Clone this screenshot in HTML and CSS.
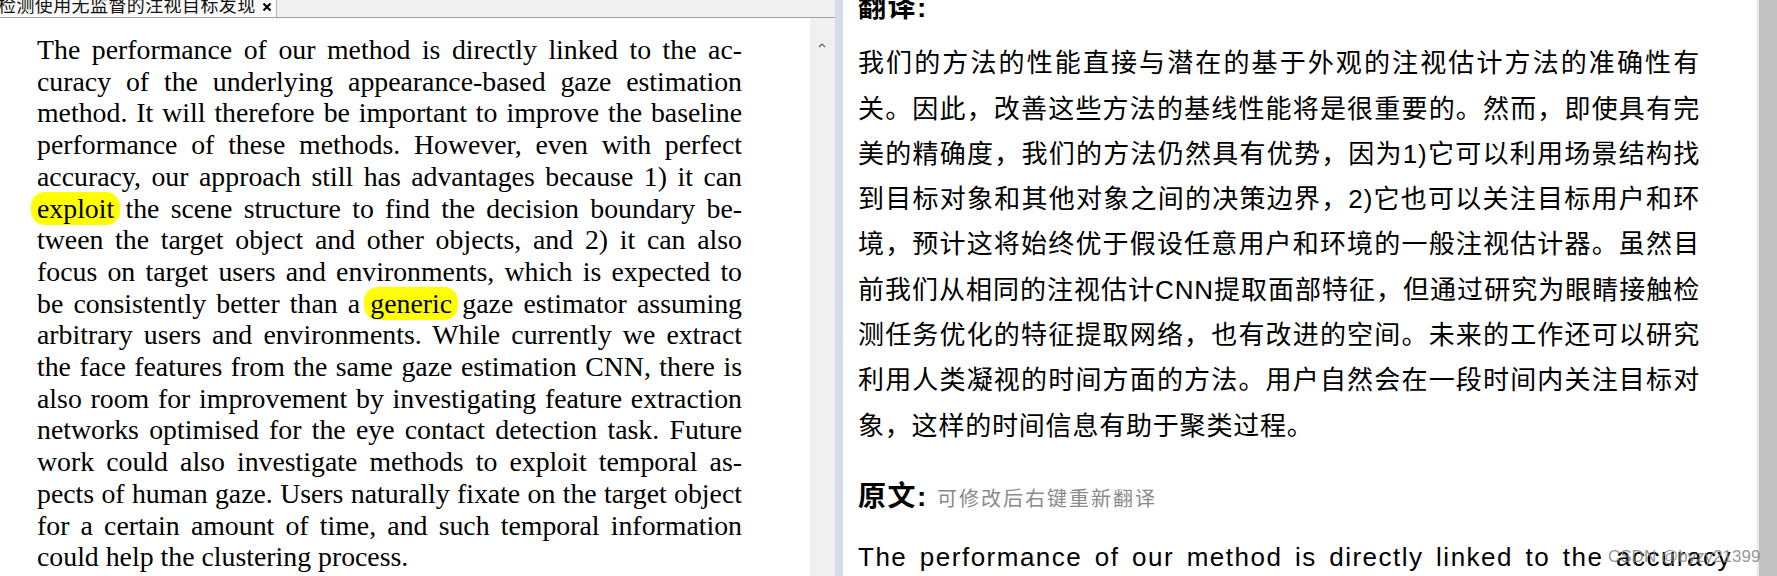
FILE: index.html
```html
<!DOCTYPE html>
<html lang="zh">
<head>
  <meta charset="UTF-8">
  <title>检测使用无监督的注视目标发现</title>
  <link rel="stylesheet" href="styles.css">
</head>
<body>
  <div class="app">
    <section class="reader">
      <div class="tabbar">
        <div class="tab">
          <span class="tab-title">检测使用无监督的注视目标发现</span>
          <svg class="tab-close" width="10" height="10" viewBox="0 0 10 10">
            <path d="M1.5 1.5 L8.5 8.5 M8.5 1.5 L1.5 8.5" stroke="#000" stroke-width="2.2" fill="none"/>
          </svg>
        </div>
      </div>
      <div class="reader-body">
        <div class="page">
          <div class="pdf-text">
            <span class="ln">The performance of our method is directly linked to the ac-</span>
            <span class="ln">curacy of the underlying appearance-based gaze estimation</span>
            <span class="ln">method. It will therefore be important to improve the baseline</span>
            <span class="ln">performance of these methods. However, even with perfect</span>
            <span class="ln">accuracy, our approach still has advantages because 1) it can</span>
            <span class="ln"><span class="hl">exploit</span> the scene structure to find the decision boundary be-</span>
            <span class="ln">tween the target object and other objects, and 2) it can also</span>
            <span class="ln">focus on target users and environments, which is expected to</span>
            <span class="ln">be consistently better than a <span class="hl">generic</span> gaze estimator assuming</span>
            <span class="ln">arbitrary users and environments. While currently we extract</span>
            <span class="ln">the face features from the same gaze estimation CNN, there is</span>
            <span class="ln">also room for improvement by investigating feature extraction</span>
            <span class="ln">networks optimised for the eye contact detection task. Future</span>
            <span class="ln">work could also investigate methods to exploit temporal as-</span>
            <span class="ln">pects of human gaze. Users naturally fixate on the target object</span>
            <span class="ln">for a certain amount of time, and such temporal information</span>
            <span class="ln end">could help the clustering process.</span>
          </div>
        </div>
        <div class="vscroll">
          <svg class="caret" width="8" height="5" viewBox="0 0 8 5">
            <path d="M1 4 L4 1 L7 4" stroke="#606060" stroke-width="1.2" fill="none"/>
          </svg>
        </div>
      </div>
    </section>

    <div class="splitter"></div>

    <section class="translate">
      <h2 class="head head-first">翻译:</h2>
      <div class="zh">
        <span class="ln">我们的方法的性能直接与潜在的基于外观的注视估计方法的准确性有</span>
        <span class="ln">关。因此，改善这些方法的基线性能将是很重要的。然而，即使具有完</span>
        <span class="ln">美的精确度，我们的方法仍然具有优势，因为1)它可以利用场景结构找</span>
        <span class="ln">到目标对象和其他对象之间的决策边界，2)它也可以关注目标用户和环</span>
        <span class="ln">境，预计这将始终优于假设任意用户和环境的一般注视估计器。虽然目</span>
        <span class="ln">前我们从相同的注视估计CNN提取面部特征，但通过研究为眼睛接触检</span>
        <span class="ln">测任务优化的特征提取网络，也有改进的空间。未来的工作还可以研究</span>
        <span class="ln">利用人类凝视的时间方面的方法。用户自然会在一段时间内关注目标对</span>
        <span class="ln end">象，这样的时间信息有助于聚类过程。</span>
      </div>
      <h2 class="head head-src">原文: <span class="hint">可修改后右键重新翻译</span></h2>
      <div class="src">
        <span class="ln">The performance of our method is directly linked to the accuracy</span>
      </div>
    </section>

    <div class="rscroll"></div>
  </div>

  <div class="watermark">CSDN @byzy21399</div>
</body>
</html>
```

FILE: styles.css
```css
html, body {
  margin: 0;
  height: 100%;
  overflow: hidden;
  background: #fff;
}

.app {
  display: flex;
  height: 576px;
  width: 1777px;
}

/* ---- left: pdf reader ---- */

.reader {
  width: 835px;
  display: flex;
  flex-direction: column;
  flex-shrink: 0;
}

.tabbar {
  height: 17px;
  background: #f0f0f0;
  border-bottom: 1px solid #a0a0a0;
  display: flex;
  overflow: hidden;
}

.tab {
  width: 276px;
  background: #fbfbfb;
  border-right: 1px solid #b4b4b4;
  display: flex;
  align-items: flex-start;
  overflow: hidden;
}

.tab-title {
  font-family: "Noto Sans CJK SC", sans-serif;
  font-size: 18px;
  line-height: 17px;
  letter-spacing: 0.4px;
  color: #111;
  margin-top: -4px;
  margin-left: -2px;
  white-space: nowrap;
}

.tab-close {
  margin-top: 2px;
  margin-left: 6px;
}

.reader-body {
  flex: 1;
  display: flex;
}

.page {
  width: 810px;
  background: #fff;
  padding-top: 16px;
}

.pdf-text {
  width: 705px;
  margin-left: 37px;
  font-family: "Liberation Serif", "Times New Roman", serif;
  font-size: 27.8px;
  line-height: 31.7px;
  color: #000;
}

.pdf-text .ln,
.zh .ln,
.src .ln {
  display: block;
  text-align: justify;
  text-align-last: justify;
}

.pdf-text .ln.end,
.zh .ln.end {
  text-align-last: left;
}

.hl {
  background: #ffff00;
  border-radius: 14px;
  padding: 1px 6px;
  margin: 0 -6px;
}

.vscroll {
  width: 25px;
  background: #f0f0f0;
  display: flex;
  justify-content: center;
  align-items: flex-start;
}

.caret {
  margin-top: 25px;
  margin-left: -2px;
}

.splitter {
  width: 8px;
  flex-shrink: 0;
  background: #d5dbef;
}

/* ---- right: translation ---- */

.translate {
  flex: 1;
  padding-left: 15px;
  background: #fff;
  font-family: "Liberation Sans", "Noto Sans CJK SC", sans-serif;
  color: #000;
  overflow: hidden;
}

.head {
  margin: 0;
  font-size: 28px;
  line-height: 45.3px;
  font-weight: bold;
  letter-spacing: 1.5px;
}

.head-first {
  margin-top: -15px;
}

.head-src {
  margin-top: 25px;
}

.hint {
  font-weight: normal;
  font-size: 20px;
  letter-spacing: 2px;
  color: #8a8a8a;
}

.zh {
  width: 842px;
  margin-top: 11px;
  font-size: 26px;
  line-height: 45.3px;
  letter-spacing: 0.8px;
}

.src {
  width: 874px;
  margin-top: 13px;
  font-size: 26px;
  line-height: 45.3px;
  letter-spacing: 1.5px;
}

.rscroll {
  width: 18px;
  flex-shrink: 0;
  background: #c1c1c1;
  border-left: 2px solid #e8e8e8;
}

.watermark {
  position: absolute;
  left: 1608px;
  top: 547px;
  font-family: "Liberation Sans", sans-serif;
  font-size: 17px;
  line-height: 20px;
  color: rgba(130, 130, 130, 0.85);
  white-space: nowrap;
}
```
